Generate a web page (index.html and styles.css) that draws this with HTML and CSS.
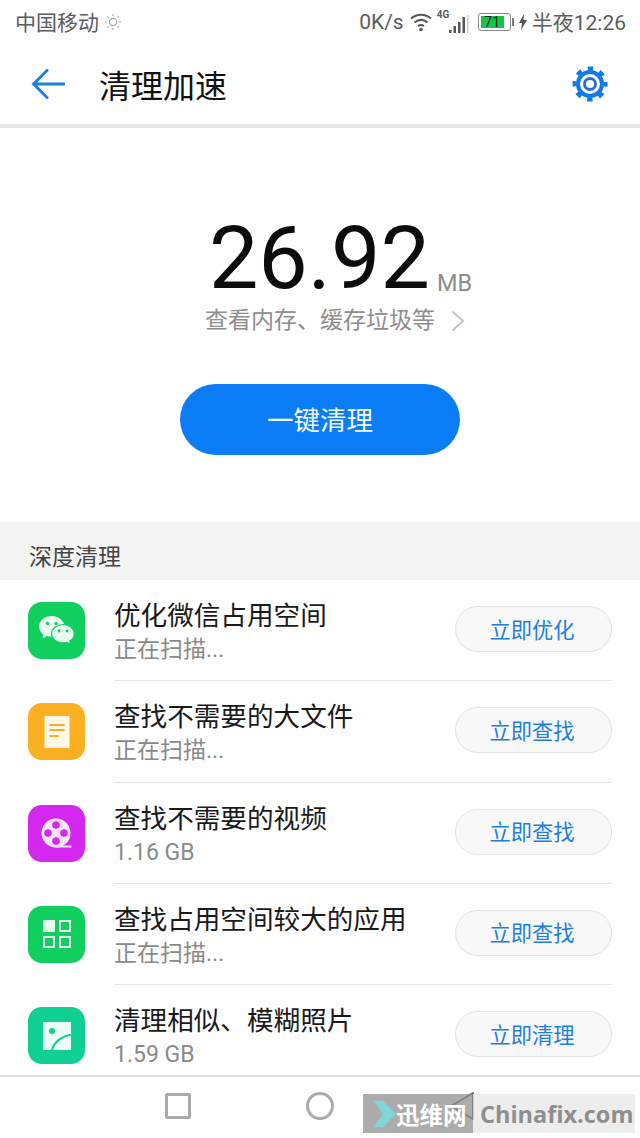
FILE: index.html
```html
<!DOCTYPE html>
<html lang="zh-CN">
<head>
    <meta charset="UTF-8">
    <meta name="viewport" content="width=device-width, initial-scale=1.0">
    <title>清理加速</title>
    <link rel="stylesheet" href="styles.css">
</head>
<body>
    <div class="screen">
        <div class="status-bar">
            <div class="status-left">
                <span class="status-cjk">中国移动</span>
                <svg class="icon-sun" width="18" height="18" viewBox="0 0 18 18" fill="none" stroke="#a8a8a8" stroke-width="1.2">
                    <circle cx="9" cy="9" r="3.6"/>
                    <path d="M9 1v2M9 15v2M1 9h2M15 9h2M3.3 3.3l1.4 1.4M13.3 13.3l1.4 1.4M3.3 14.7l1.4-1.4M13.3 4.7l1.4-1.4"/>
                </svg>
            </div>
            <div class="status-right">
                <span class="net-speed">0K/s</span>
                <svg class="icon-wifi" width="24" height="20" viewBox="0 0 24 20" fill="none" stroke="#555" stroke-width="2">
                    <path d="M2 6.5c6-5 14-5 20 0M5.5 10.5c4-3.200 9-3.200 13 0M9 14c1.800-1.300 4.200-1.300 6 0"/>
                    <circle cx="12" cy="17.500" r="1.800" fill="#555" stroke="none"/>
                </svg>
                <div class="signal">
                    <span class="signal-label">4G</span>
                    <svg width="20" height="20" viewBox="0 0 20 20" fill="#555">
                        <rect x="0" y="16" width="2.500" height="3"/>
                        <rect x="4.500" y="12" width="2.500" height="7"/>
                        <rect x="9" y="8" width="2.500" height="11"/>
                        <rect x="13.500" y="3" width="2.500" height="16"/>
                        <rect x="18" y="1" width="1.500" height="18" fill="#ccc"/>
                    </svg>
                </div>
                <div class="battery">
                    <div class="battery-body"><div class="battery-fill">71</div></div>
                    <div class="battery-cap"></div>
                </div>
                <svg class="icon-bolt" width="8" height="16" viewBox="0 0 8 16" fill="#555">
                    <path d="M5 0L0 9h3l-1 7 6-10H4.500z"/>
                </svg>
                <span class="clock status-cjk">半夜12:26</span>
            </div>
        </div>

        <div class="toolbar">
            <svg class="icon-back" width="36" height="34" viewBox="0 0 36 34" fill="none" stroke="#1c7fe6" stroke-width="2.800">
                <path d="M34 17H3M17 2.500L2.500 17 17 31.500"/>
            </svg>
            <h1 class="toolbar-title">清理加速</h1>
            <svg class="icon-gear" width="36" height="36" viewBox="0 0 36 36" fill="none">
                <circle cx="18" cy="18" r="15.500" stroke="#0f7bea" stroke-width="4" stroke-dasharray="5.500 6.672" stroke-dashoffset="2.750"/>
                <circle cx="18" cy="18" r="12" stroke="#0f7bea" stroke-width="4"/>
                <circle cx="18" cy="18" r="5.500" stroke="#2a70d0" stroke-width="3"/>
            </svg>
        </div>

        <div class="hero">
            <div class="storage">
                <span class="storage-num">26.92</span>
                <span class="storage-unit">MB</span>
            </div>
            <div class="hero-link">
                <span>查看内存、缓存垃圾等</span>
                <svg width="14" height="22" viewBox="0 0 14 22" fill="none" stroke="#c4c4c4" stroke-width="2">
                    <path d="M1.500 1.500L12 11 1.500 20.500"/>
                </svg>
            </div>
            <button class="clean-btn">一键清理</button>
        </div>

        <div class="section-title">深度清理</div>

        <div class="list">
            <div class="row">
                <div class="app-icon green">
                    <svg width="40" height="32" viewBox="0 0 40 32">
                        <path fill="#eafbf0" d="M15 1C7.500 1 2 5.800 2 11.500c0 3.300 1.800 6.100 4.600 8l-1.200 3.900 4.500-2.300c1.500.4 3.200.7 5.100.7 1 0 2-.1 2.900-.3C25 20 30 16 28 11 26 5 21 1 15 1z"/>
                        <circle cx="10.500" cy="8.500" r="1.700" fill="#10cf5e"/>
                        <circle cx="19" cy="8.500" r="1.700" fill="#10cf5e"/>
                        <path fill="#eafbf0" stroke="#10cf5e" stroke-width="1.200" d="M26 9.500c-6.500 0-11.500 4.200-11.500 9.200s5 9.200 11.500 9.200c1.400 0 2.800-.2 4-.6l3.800 2.200-1-3.400c2.700-1.700 4.500-4.300 4.500-7.400 0-5-4.800-9.200-10.800-9.200z"/>
                        <circle cx="22" cy="16" r="1.400" fill="#10cf5e"/>
                        <circle cx="30" cy="16" r="1.400" fill="#10cf5e"/>
                    </svg>
                </div>
                <div class="row-text">
                    <div class="row-title">优化微信占用空间</div>
                    <div class="row-sub">正在扫描...</div>
                </div>
                <button class="row-btn">立即优化</button>
            </div>
            <div class="row">
                <div class="app-icon amber">
                    <svg width="26" height="32" viewBox="0 0 26 32">
                        <rect x="0.500" y="0" width="25" height="32" fill="#fff8e8"/>
                        <path d="M5.500 9h15M5.500 14h15M5.500 20h9" stroke="#fbb022" stroke-width="2"/>
                    </svg>
                </div>
                <div class="row-text">
                    <div class="row-title">查找不需要的大文件</div>
                    <div class="row-sub">正在扫描...</div>
                </div>
                <button class="row-btn">立即查找</button>
            </div>
            <div class="row">
                <div class="app-icon purple">
                    <svg width="32" height="30" viewBox="0 0 32 30">
                        <path d="M15 28.500h15.500" stroke="#f8e6ff" stroke-width="2"/>
                        <circle cx="15" cy="15" r="14.500" fill="#f8e6ff"/>
                        <circle cx="15" cy="7" r="3.800" fill="#d427f0"/>
                        <circle cx="15" cy="23" r="3.800" fill="#d427f0"/>
                        <circle cx="7" cy="15" r="3.800" fill="#d427f0"/>
                        <circle cx="23" cy="15" r="3.800" fill="#d427f0"/>
                    </svg>
                </div>
                <div class="row-text">
                    <div class="row-title">查找不需要的视频</div>
                    <div class="row-sub">1.16 GB</div>
                </div>
                <button class="row-btn">立即查找</button>
            </div>
            <div class="row">
                <div class="app-icon green">
                    <svg width="28" height="28" viewBox="0 0 28 28" fill="none" stroke="#e6fbef" stroke-width="2">
                        <rect x="1" y="1" width="10" height="10" fill="#e6fbef"/>
                        <rect x="17" y="1" width="10" height="10"/>
                        <rect x="1" y="17" width="10" height="10"/>
                        <rect x="17" y="17" width="10" height="10"/>
                    </svg>
                </div>
                <div class="row-text">
                    <div class="row-title">查找占用空间较大的应用</div>
                    <div class="row-sub">正在扫描...</div>
                </div>
                <button class="row-btn">立即查找</button>
            </div>
            <div class="row">
                <div class="app-icon teal">
                    <svg width="28" height="28" viewBox="0 0 28 28">
                        <rect width="28" height="28" fill="#eafcf5"/>
                        <circle cx="9" cy="9" r="3" fill="#0fd092"/>
                        <path d="M9 28C11 20 19 14 28 13" fill="none" stroke="#0fd092" stroke-width="2"/>
                    </svg>
                </div>
                <div class="row-text">
                    <div class="row-title">清理相似、模糊照片</div>
                    <div class="row-sub">1.59 GB</div>
                </div>
                <button class="row-btn">立即清理</button>
            </div>
        </div>

        <div class="nav-bar">
            <div class="nav-item"><div class="nav-square"></div></div>
            <div class="nav-item"><div class="nav-circle"></div></div>
            <div class="nav-item">
                <svg width="30" height="30" viewBox="0 0 30 30" fill="none" stroke="#666" stroke-width="2" stroke-linejoin="round">
                    <path d="M26 2v26L4 15z"/>
                </svg>
            </div>
        </div>

        <div class="watermark">
            <div class="wm-left">
                <svg width="26" height="26" viewBox="0 0 26 26" fill="#7fd8d6">
                    <path d="M1 0h9l13 13-13 13H1l9-13z"/>
                </svg>
                <span>迅维网</span>
            </div>
            <div class="wm-right">Chinafix.com</div>
        </div>
    </div>
</body>
</html>
```

FILE: styles.css
```css
* {
    box-sizing: border-box;
}
body {
    margin: 0;
    background: #fff;
    font-family: Roboto, "Noto Sans CJK SC", sans-serif;
}
.screen {
    position: relative;
    width: 640px;
    height: 1138px;
    display: flex;
    flex-direction: column;
    overflow: hidden;
    background: #fefefe;
}

/* status bar */
.status-bar {
    height: 44px;
    flex: none;
    display: flex;
    justify-content: space-between;
    align-items: center;
    padding: 0 14px 0 15px;
    font-size: 21px;
    color: #5c5c5c;
}
.status-left, .status-right {
    display: flex;
    align-items: center;
}
.status-cjk {
    padding-bottom: 2px;
}
.icon-sun {
    margin-left: 5px;
}
.icon-wifi {
    margin-left: 5px;
}
.signal {
    position: relative;
    width: 32px;
    height: 24px;
    margin-left: 4px;
    display: flex;
    justify-content: flex-end;
    align-items: flex-end;
}
.signal-label {
    position: absolute;
    left: 0;
    top: -1px;
    font-size: 10px;
    font-weight: 700;
    line-height: 12px;
}
.battery {
    display: flex;
    align-items: center;
    margin-left: 9px;
}
.battery-body {
    width: 33px;
    height: 18px;
    padding: 2px;
    border: 1px solid #888;
    border-radius: 3px;
}
.battery-fill {
    width: 23px;
    height: 12px;
    background: #12c64c;
    color: #222;
    font-size: 14px;
    line-height: 12px;
    text-align: center;
}
.battery-cap {
    width: 2px;
    height: 8px;
    margin-left: 1px;
    background: #777;
}
.icon-bolt {
    margin-left: 5px;
}
.clock {
    margin-left: 5px;
}

/* toolbar */
.toolbar {
    height: 84px;
    flex: none;
    display: flex;
    align-items: center;
    padding: 0 32px 0 31px;
    border-bottom: 4px solid #e9e9e9;
}
.toolbar-title {
    margin: 0 0 0 32px;
    flex: 1;
    font-size: 32px;
    font-weight: 400;
    color: #111;
}

/* hero */
.hero {
    height: 394px;
    flex: none;
    display: flex;
    flex-direction: column;
    align-items: center;
    padding-top: 86px;
}
.storage {
    display: flex;
    padding-left: 41px;
    height: 88px;
}
.storage-num {
    font-size: 88px;
    line-height: 88px;
    color: #0c0c0c;
}
.storage-unit {
    align-self: flex-end;
    margin-left: 7px;
    font-size: 23.500px;
    line-height: 38px;
    color: #8c8c8c;
}
.hero-link {
    display: flex;
    align-items: center;
    gap: 16px;
    margin-top: 2px;
    padding-left: 30px;
    font-size: 23px;
    line-height: 34px;
    color: #8e8e8e;
}
.clean-btn {
    width: 280px;
    height: 71px;
    margin-top: 46px;
    padding: 0 0 2px;
    border: none;
    border-radius: 36px;
    background: #0a7cf5;
    color: #f2f8ff;
    font-family: inherit;
    font-size: 26.500px;
}

/* list */
.section-title {
    height: 58px;
    flex: none;
    padding: 20px 0 0 29px;
    background: #f4f4f4;
    font-size: 23px;
    line-height: 32px;
    color: #444;
}
.list {
    flex: 1;
    overflow: hidden;
}
.row {
    height: 101.250px;
    display: flex;
    align-items: center;
    padding: 0 28px;
    position: relative;
}
.row + .row::before {
    content: "";
    position: absolute;
    left: 114px;
    right: 28px;
    top: -1px;
    height: 1px;
    background: #e6e6e6;
}
.app-icon {
    width: 57px;
    height: 57px;
    flex: none;
    display: flex;
    justify-content: center;
    align-items: center;
    border-radius: 14px;
}
.green {
    background: #10cf5e;
}
.amber {
    background: #fbb022;
}
.purple {
    background: #d427f0;
}
.teal {
    background: #0fd092;
}
.row-text {
    flex: 1;
    margin-left: 29px;
    padding-top: 3px;
}
.row-title {
    font-size: 26.600px;
    line-height: 36px;
    color: #1a1a1a;
}
.row-sub {
    font-size: 23px;
    line-height: 32px;
    color: #8a8a8a;
}
.row-btn {
    width: 157px;
    height: 46px;
    flex: none;
    margin-bottom: 3px;
    padding: 0 3px 2px 0;
    border: 1px solid #e2e2e2;
    border-radius: 23px;
    background: #f8f8f8;
    color: #1c7fe0;
    font-family: inherit;
    font-size: 21.250px;
}

/* nav bar */
.nav-bar {
    height: 63px;
    flex: none;
    display: flex;
    justify-content: center;
    padding-top: 14px;
    border-top: 2px solid #e3e3e3;
    background: #fefefe;
}
.nav-item {
    width: 142px;
    height: 30px;
    display: flex;
    justify-content: center;
    align-items: center;
}
.nav-square {
    width: 26px;
    height: 26px;
    border: 3px solid #aaa;
    border-radius: 2px;
}
.nav-circle {
    width: 28px;
    height: 28px;
    border: 3px solid #aaa;
    border-radius: 50%;
}

/* watermark stamped over the screenshot */
.watermark {
    position: absolute;
    left: 363px;
    top: 1094px;
    width: 272px;
    height: 39px;
    display: flex;
}
.wm-left {
    width: 110px;
    display: flex;
    align-items: center;
    padding-left: 10px;
    background: rgba(140, 140, 140, 0.72);
    color: #fff;
    font-size: 23.500px;
    font-weight: 700;
}
.wm-left svg {
    margin-right: -3px;
}
.wm-right {
    flex: 1;
    padding-left: 7px;
    background: rgba(232, 232, 232, 0.8);
    color: #8e8e8e;
    font-family: "Open Sans", sans-serif;
    font-size: 23.500px;
    font-weight: 700;
    line-height: 41px;
    white-space: nowrap;
}
```
